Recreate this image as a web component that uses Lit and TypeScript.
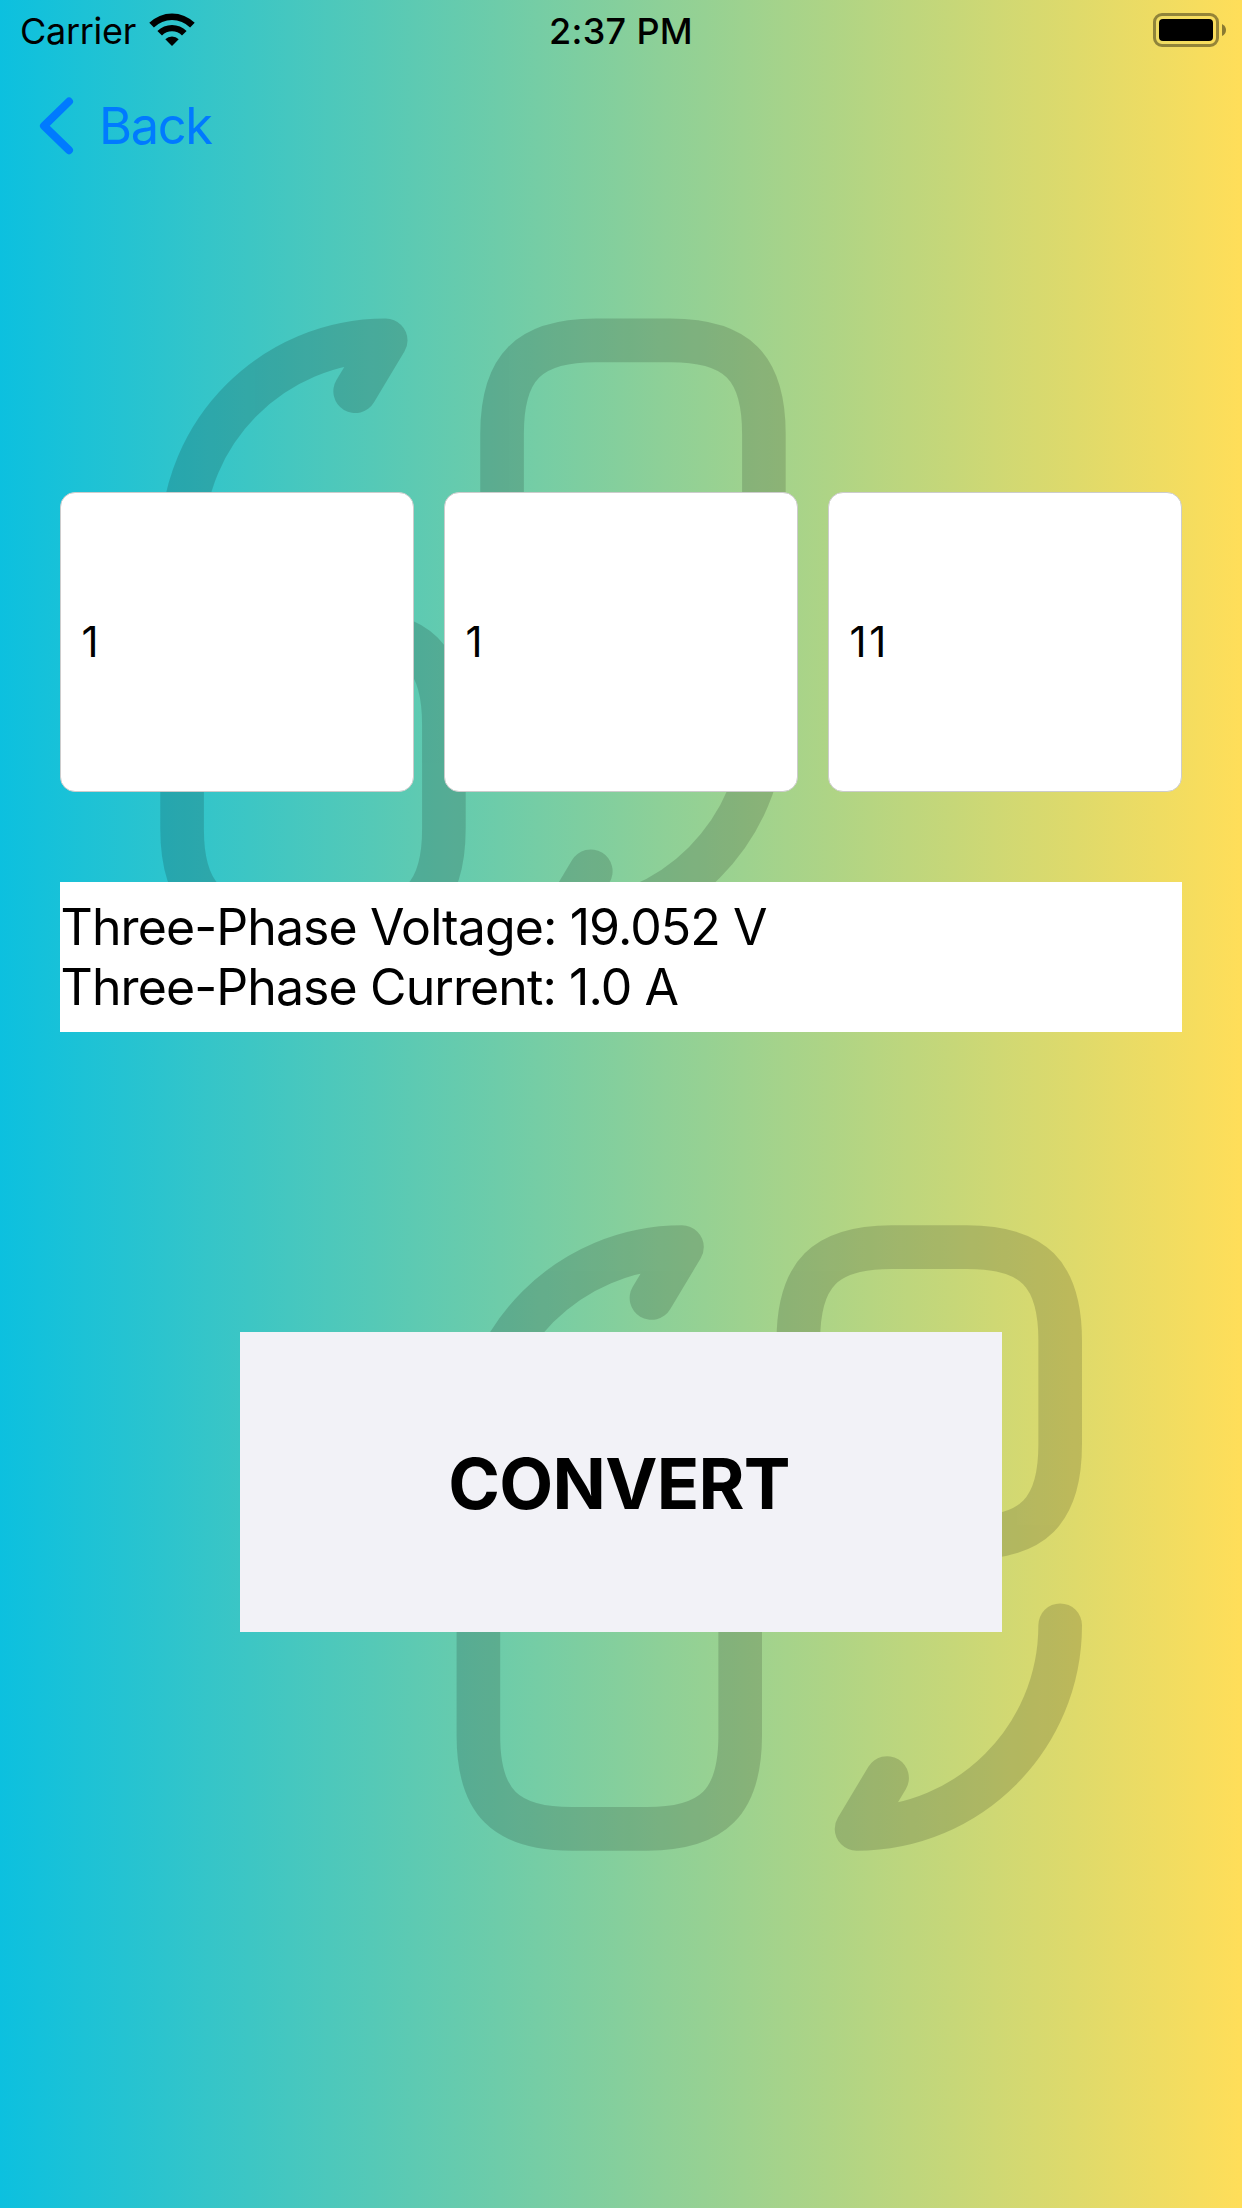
import { LitElement, html, css, svg } from "lit";
import { customElement, property, state } from "lit/decorators.js";

const swapMark = svg`
  <path d="M22 15c0 3.87-3.13 7-7 7l1.05-1.75" />
  <path d="M2 9c0-3.87 3.13-7 7-7L7.95 3.75" />
  <path d="M13 5.21C13 2.92 13.92 2 16.21 2h2.58C21.08 2 22 2.92 22 5.21v3.58C22 11.08 21.08 12 18.79 12h-2.58C13.92 12 13 11.08 13 8.79z" />
  <path d="M2 15.21C2 12.92 2.92 12 5.21 12h2.58C10.08 12 11 12.92 11 15.21v3.58C11 21.08 10.08 22 7.79 22H5.21C2.92 22 2 21.08 2 18.79z" />
`;

@customElement("status-bar")
class StatusBar extends LitElement {
  static styles = css`
    :host {
      display: grid;
      grid-template-columns: 1fr auto 1fr;
      align-items: center;
      height: 60px;
      padding: 0 16px 0 20px;
      box-sizing: border-box;
      font-size: 36px;
      line-height: 58px;
      color: #000;
    }
    .left {
      display: flex;
      align-items: center;
      gap: 13px;
    }
    .carrier {
      padding-top: 2px;
      letter-spacing: -0.28px;
    }
    .time {
      padding: 2px 4px 0 0;
      font-weight: 500;
      letter-spacing: 0.3px;
    }
    .right {
      display: flex;
      justify-content: flex-end;
    }
    svg {
      display: block;
    }
  `;

  render() {
    return html`
      <div class="left">
        <span class="carrier">Carrier</span>
        <svg width="46" height="60" viewBox="0 0 46 60">
          <path d="M0.3 22.8A32.5 32.5 0 0 1 45.7 22.8L41.1 27.4A26 26 0 0 0 4.9 27.4Z" />
          <path d="M8.4 31A20.8 20.8 0 0 1 37.6 31L33 35.4A14.4 14.4 0 0 0 13 35.4Z" />
          <path d="M16.3 39.2A9.4 9.4 0 0 1 29.7 39.2L23 45.9Z" />
        </svg>
      </div>
      <span class="time">2:37 PM</span>
      <div class="right">
        <svg width="74" height="60" viewBox="0 0 74 60">
          <rect x="2.5" y="14.5" width="63" height="31" rx="7.5" fill="none" stroke="#000" stroke-opacity="0.4" stroke-width="3" />
          <rect x="7" y="19" width="54" height="22" rx="4" />
          <path d="M70 24q4 2 4 6t-4 6z" fill-opacity="0.45" />
        </svg>
      </div>
    `;
  }
}

@customElement("value-field")
class ValueField extends LitElement {
  @property() value = "";

  static styles = css`
    :host {
      display: flex;
      align-items: center;
      height: 300px;
      box-sizing: border-box;
      padding: 0 20px 1px 20.5px;
      background: #fff;
      border: 1px solid #cccccc;
      border-radius: 15px;
      font-size: 42px;
      letter-spacing: 2.6px;
      color: #000;
    }
  `;

  render() {
    return html`<span>${this.value}</span>`;
  }
}

@customElement("app-root")
class AppRoot extends LitElement {
  @state() private values = ["1", "1", "11"];
  @state() private results = [
    "Three-Phase Voltage: 19.052 V",
    "Three-Phase Current: 1.0 A",
  ];

  static styles = css`
    :host {
      display: block;
      position: relative;
      width: 1242px;
      height: 2208px;
      overflow: hidden;
      background: linear-gradient(90deg, #0cc0df, #ffde59);
      font-family: Inter, "Liberation Sans", sans-serif;
    }
    .backdrop {
      position: absolute;
      inset: 0;
      fill: none;
      stroke: #000;
      stroke-width: 1.5;
      stroke-linecap: round;
      stroke-linejoin: round;
    }
    .screen {
      position: relative;
      display: flex;
      flex-direction: column;
    }
    .nav {
      display: flex;
      align-items: center;
      height: 132px;
      padding-left: 36px;
      color: #007aff;
    }
    .back {
      display: flex;
      align-items: center;
      gap: 17px;
      font-size: 50.5px;
      line-height: 60px;
      letter-spacing: -1.3px;
    }
    .fields {
      display: grid;
      grid-template-columns: repeat(3, 1fr);
      gap: 30px;
      margin: 300px 60px 0;
    }
    .results {
      box-sizing: border-box;
      height: 150px;
      margin: 90px 60px 0;
      padding: 15px 0 0 0.5px;
      background: #fff;
      color: #000;
      font-size: 50px;
      line-height: 60px;
      letter-spacing: -0.9px;
    }
    .convert {
      display: flex;
      align-items: center;
      justify-content: center;
      box-sizing: border-box;
      width: 762px;
      height: 300px;
      margin: 300px auto 0;
      padding: 2px 4px 0 0;
      background: #f2f2f7;
      color: #000;
      font-size: 70px;
      font-weight: 700;
      letter-spacing: -0.7px;
    }
  `;

  render() {
    return html`
      <svg class="backdrop" width="1242" height="2208" viewBox="0 0 1242 2208">
        <g opacity="0.15" transform="translate(123.9 282.2) scale(29.09)">${swapMark}</g>
        <g opacity="0.15" transform="translate(420.2 1188.9) scale(29.09)">${swapMark}</g>
      </svg>
      <div class="screen">
        <status-bar></status-bar>
        <div class="nav">
          <div class="back">
            <svg width="46" height="66" viewBox="0 0 46 66" fill="none" stroke="#007aff" stroke-width="8" stroke-linecap="round" stroke-linejoin="round">
              <path d="M33 8.5L8 32.8L33 57.2" />
            </svg>
            <span>Back</span>
          </div>
        </div>
        <div class="fields">
          ${this.values.map((v) => html`<value-field .value=${v}></value-field>`)}
        </div>
        <div class="results">
          ${this.results.map((line) => html`<div>${line}</div>`)}
        </div>
        <div class="convert" role="button">CONVERT</div>
      </div>
    `;
  }
}
